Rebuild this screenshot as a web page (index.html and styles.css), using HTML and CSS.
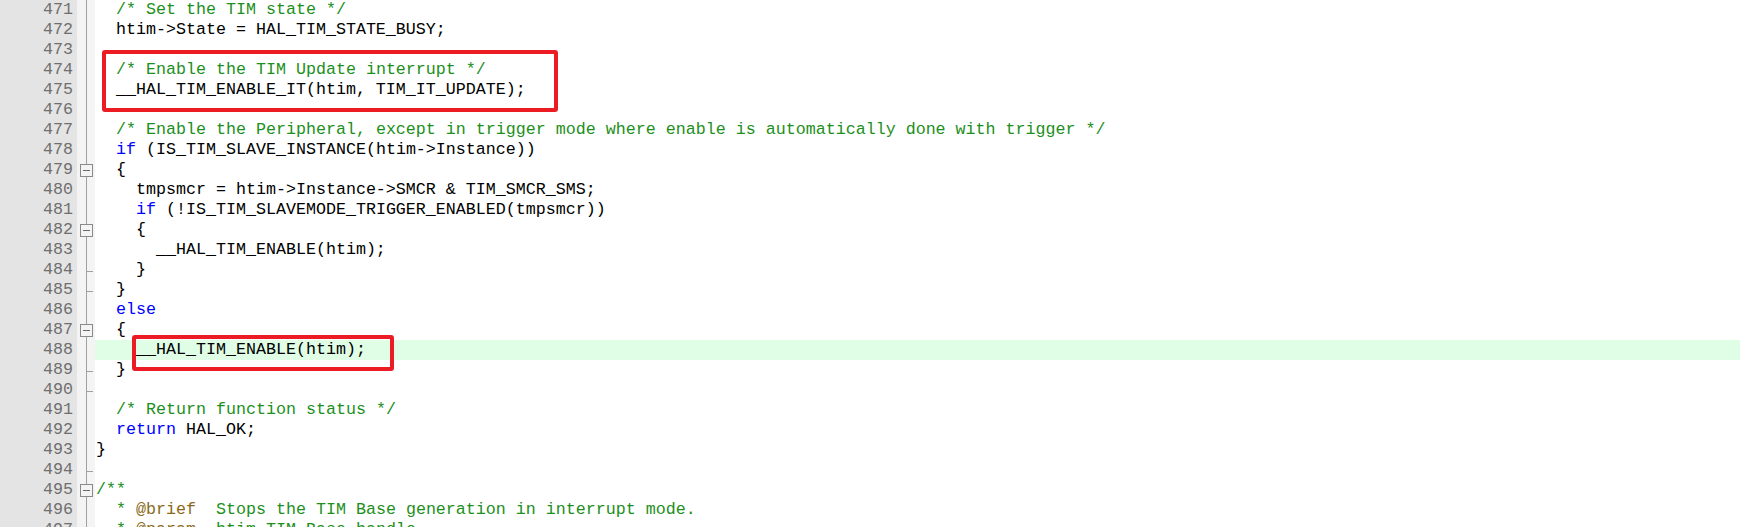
FILE: index.html
```html
<!DOCTYPE html>
<html>
<head>
<meta charset="utf-8">
<title>Editor</title>
<link rel="stylesheet" href="styles.css">
</head>
<body>
<div class="editor">
  <div class="line"><span class="num">471</span><span class="fold"></span><span class="code">  <span class="cm">/* Set the TIM state */</span></span></div>
  <div class="line"><span class="num">472</span><span class="fold"></span><span class="code">  htim-&gt;State = HAL_TIM_STATE_BUSY;</span></div>
  <div class="line"><span class="num">473</span><span class="fold"></span><span class="code"></span></div>
  <div class="line"><span class="num">474</span><span class="fold"></span><span class="code">  <span class="cm">/* Enable the TIM Update interrupt */</span></span></div>
  <div class="line"><span class="num">475</span><span class="fold"></span><span class="code">  __HAL_TIM_ENABLE_IT(htim, TIM_IT_UPDATE);</span></div>
  <div class="line"><span class="num">476</span><span class="fold"></span><span class="code"></span></div>
  <div class="line"><span class="num">477</span><span class="fold"></span><span class="code">  <span class="cm">/* Enable the Peripheral, except in trigger mode where enable is automatically done with trigger */</span></span></div>
  <div class="line"><span class="num">478</span><span class="fold"></span><span class="code">  <span class="kw">if</span> (IS_TIM_SLAVE_INSTANCE(htim-&gt;Instance))</span></div>
  <div class="line"><span class="num">479</span><span class="fold"><span class="box"></span></span><span class="code">  {</span></div>
  <div class="line"><span class="num">480</span><span class="fold"></span><span class="code">    tmpsmcr = htim-&gt;Instance-&gt;SMCR &amp; TIM_SMCR_SMS;</span></div>
  <div class="line"><span class="num">481</span><span class="fold"></span><span class="code">    <span class="kw">if</span> (!IS_TIM_SLAVEMODE_TRIGGER_ENABLED(tmpsmcr))</span></div>
  <div class="line"><span class="num">482</span><span class="fold"><span class="box"></span></span><span class="code">    {</span></div>
  <div class="line"><span class="num">483</span><span class="fold"></span><span class="code">      __HAL_TIM_ENABLE(htim);</span></div>
  <div class="line"><span class="num">484</span><span class="fold end"></span><span class="code">    }</span></div>
  <div class="line"><span class="num">485</span><span class="fold end"></span><span class="code">  }</span></div>
  <div class="line"><span class="num">486</span><span class="fold"></span><span class="code">  <span class="kw">else</span></span></div>
  <div class="line"><span class="num">487</span><span class="fold"><span class="box"></span></span><span class="code">  {</span></div>
  <div class="line current"><span class="num">488</span><span class="fold"></span><span class="code">    __HAL_TIM_ENABLE(htim);</span></div>
  <div class="line"><span class="num">489</span><span class="fold end"></span><span class="code">  }</span></div>
  <div class="line"><span class="num">490</span><span class="fold end"></span><span class="code"></span></div>
  <div class="line"><span class="num">491</span><span class="fold"></span><span class="code">  <span class="cm">/* Return function status */</span></span></div>
  <div class="line"><span class="num">492</span><span class="fold"></span><span class="code">  <span class="kw">return</span> HAL_OK;</span></div>
  <div class="line"><span class="num">493</span><span class="fold"></span><span class="code">}</span></div>
  <div class="line"><span class="num">494</span><span class="fold end"></span><span class="code"></span></div>
  <div class="line"><span class="num">495</span><span class="fold"><span class="box"></span></span><span class="code"><span class="cm">/**</span></span></div>
  <div class="line"><span class="num">496</span><span class="fold"></span><span class="code">  <span class="cm">* <span class="tag">@brief</span>  Stops the TIM Base generation in interrupt mode.</span></span></div>
  <div class="line"><span class="num">497</span><span class="fold"></span><span class="code">  <span class="cm">* <span class="tag">@param</span>  htim TIM Base handle</span></span></div>

  <div class="mark mark-a"></div>
  <div class="mark mark-b"></div>
</div>
</body>
</html>
```

FILE: styles.css
```css
html, body {
  margin: 0;
  padding: 0;
  background: #ffffff;
  overflow: hidden;
}

.editor {
  position: relative;
  width: 1742px;
  height: 527px;
  overflow: hidden;
  font-family: "Liberation Mono", "Courier New", monospace;
  font-size: 16.667px;
  color: #000000;
}

.line {
  display: grid;
  grid-template-columns: 77px 18px 1fr;
  height: 20px;
  line-height: 20px;
}

.num {
  background: #e4e4e4;
  color: #6f6f6f;
  text-align: right;
  padding-right: 4px;
}

.fold {
  display: flex;
  align-items: center;
  justify-content: center;
  background:
    linear-gradient(#a0a0a0, #a0a0a0) no-repeat 9px 0 / 1px 100%,
    #f4f4f4;
}

.fold.end {
  background:
    linear-gradient(#a0a0a0, #a0a0a0) no-repeat 9px 0 / 1px 100%,
    linear-gradient(#a0a0a0, #a0a0a0) no-repeat 9px 11px / 7px 1px,
    #f4f4f4;
}

.box {
  width: 11px;
  height: 11px;
  border: 1px solid #8a8a8a;
  background:
    linear-gradient(#6a6a6a, #6a6a6a) no-repeat 2px 5px / 7px 1px,
    #f4f4f4;
}

.code {
  white-space: pre;
  padding-left: 1px;
  margin-right: 2px;
}

.current .code {
  background: #e0fde6;
}

.cm {
  color: #1d8f1d;
}

.tag {
  color: #8a6a1a;
}

.kw {
  color: #0000ff;
}

.mark {
  position: absolute;
  border: 4px solid #ec1c24;
  border-radius: 3px;
  box-sizing: border-box;
}

.mark-a {
  left: 102px;
  top: 50px;
  width: 456px;
  height: 62px;
}

.mark-b {
  left: 132px;
  top: 335px;
  width: 262px;
  height: 36px;
}
```
